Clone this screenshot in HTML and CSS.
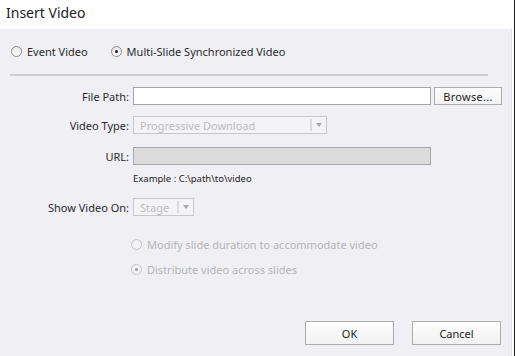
FILE: index.html
```html
<!DOCTYPE html>
<html lang="en">

<head>
    <meta charset="UTF-8" />
    <title>Insert Video</title>
    <link rel="stylesheet" href="styles.css">
</head>

<body>
    <div class="window">
        <div class="titlebar">Insert Video</div>

        <div class="panel">
            <div class="source-row">
                <label class="radio"><span class="dot"></span>Event Video</label>
                <label class="radio checked"><span class="dot"></span>Multi-Slide Synchronized Video</label>
            </div>

            <hr class="divider">

            <div class="form">
                <div class="row row-file">
                    <span class="label">File Path:</span>
                    <input class="field" type="text">
                    <button class="btn btn-browse">Browse...</button>
                </div>

                <div class="row row-type">
                    <span class="label">Video Type:</span>
                    <div class="select select-type">
                        <span class="select-text">Progressive Download</span>
                        <span class="select-arrow"></span>
                    </div>
                </div>

                <div class="row row-url">
                    <span class="label">URL:</span>
                    <input class="field field-disabled" type="text" disabled>
                </div>

                <div class="example">Example : C:\path\to\video</div>

                <div class="row row-show">
                    <span class="label">Show Video On:</span>
                    <div class="select select-stage">
                        <span class="select-text">Stage</span>
                        <span class="select-arrow"></span>
                    </div>
                </div>

                <div class="options">
                    <label class="radio disabled"><span class="dot"></span>Modify slide duration to accommodate video</label>
                    <label class="radio disabled checked"><span class="dot"></span>Distribute video across slides</label>
                </div>
            </div>

            <div class="actions">
                <button class="btn btn-action">OK</button>
                <button class="btn btn-action">Cancel</button>
            </div>
        </div>
    </div>
</body>

</html>
```

FILE: styles.css
```css
*,
*::before,
*::after {
    box-sizing: border-box;
    margin: 0;
    padding: 0;
}

html,
body {
    width: 515px;
    height: 356px;
    overflow: hidden;
    background: #fff;
    font-family: 'Noto Sans', 'Open Sans', sans-serif;
    font-size: 11px;
    color: #2a2a2a;
}

.window {
    width: 515px;
    height: 356px;
    display: flex;
    flex-direction: column;
    border-right: 1px solid #1e1e1e;
    background: #fff;
}

.titlebar {
    height: 29px;
    padding: 3px 0 0 6px;
    font-size: 14px;
    color: #222;
    background: #fff;
}

.panel {
    flex: 1;
    margin-right: 2px;
    background: #f0f0f4;
    border-right: 1px solid #e2e2e6;
    display: flex;
    flex-direction: column;
}

/* radios */

.radio {
    display: flex;
    align-items: center;
    gap: 5px;
    white-space: nowrap;
}

.dot {
    width: 11px;
    height: 11px;
    border-radius: 50%;
    border: 1px solid #8a8a8a;
    background: linear-gradient(#e6e6e6, #fff);
    display: flex;
    align-items: center;
    justify-content: center;
}

.radio.checked .dot::after {
    content: '';
    width: 3px;
    height: 3px;
    border-radius: 50%;
    background: #222;
}

.radio.disabled {
    color: #b4b4b8;
}

.radio.disabled .dot {
    border-color: #c4c4c8;
    background: #f2f2f4;
}

.radio.disabled.checked .dot::after {
    background: #9a9a9a;
}

.source-row {
    display: flex;
    gap: 23px;
    padding: 10px 0 0 11px;
    height: 35px;
}

.divider {
    border: none;
    border-top: 2px solid #cfcfd3;
    margin: 10px 0 0 10px;
    width: 478px;
}

/* form */

.form {
    display: flex;
    flex-direction: column;
    padding-top: 11px;
}

.row {
    display: flex;
    align-items: center;
    height: 18px;
}

.label {
    width: 130px;
    padding-right: 1px;
    text-align: right;
    margin-right: 3px;
}

.field {
    width: 298px;
    height: 18px;
    border: 1px solid #a4a4a8;
    background: #fff;
    font: inherit;
}

.field-disabled {
    background: #dcdcdc;
    border-color: #a8a8a8;
}

.btn {
    font-family: inherit;
    font-size: 11px;
    color: #222;
    background: linear-gradient(#fdfdfd, #f2f2f2);
    border: 1px solid #acacac;
}

.btn-browse {
    width: 68px;
    height: 18px;
    margin-left: 3px;
    letter-spacing: 0.3px;
}

.row-type {
    margin-top: 11px;
}

.row-url {
    margin-top: 13px;
}

.row-show {
    margin-top: 13px;
}

.select {
    height: 18px;
    display: flex;
    align-items: center;
    border: 1px solid #c8c8cc;
    background: #f4f4f6;
    color: #bcbcc0;
}

.select-type {
    width: 194px;
}

.select-stage {
    width: 61px;
}

.select-text {
    flex: 1;
    padding-left: 6px;
}

.select-arrow {
    width: 16px;
    height: 12px;
    border-left: 2px solid #dadadc;
    display: flex;
    align-items: center;
    justify-content: center;
}

.select-arrow::after {
    content: '';
    border-left: 3px solid transparent;
    border-right: 3px solid transparent;
    border-top: 4px solid #a8a8ac;
}

.example {
    margin: 7px 0 0 133px;
    font-size: 9.5px;
    color: #222;
}

.options {
    display: flex;
    flex-direction: column;
    gap: 10px;
    padding: 21px 0 0 131px;
}

/* buttons */

.actions {
    display: flex;
    justify-content: flex-end;
    gap: 18px;
    margin-top: auto;
    padding: 0 10px 11px 0;
}

.btn-action {
    width: 89px;
    height: 24px;
}
```
